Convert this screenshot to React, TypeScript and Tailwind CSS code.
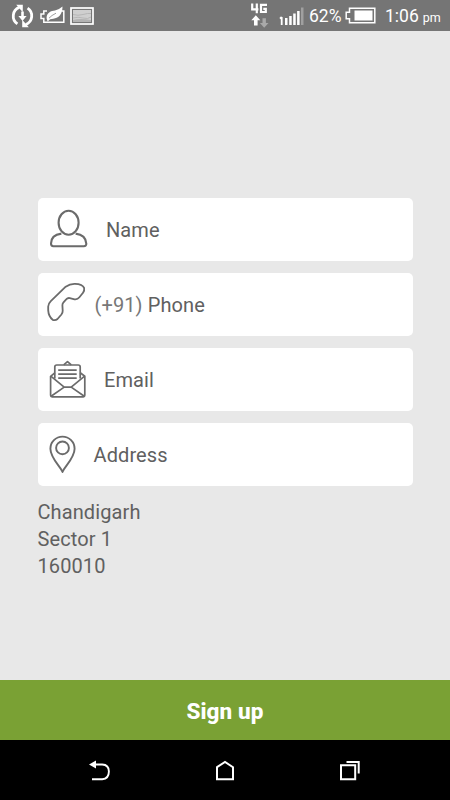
const fields = [
  { label: "Name", icon: <PersonIcon />, className: "pl-[11.5px] gap-[18px]" },
  { label: "Phone", prefix: "(+91)", icon: <PhoneIcon />, className: "pl-[9px] gap-[9px]" },
  { label: "Email", icon: <MailIcon />, className: "pl-[11.5px] gap-[18px]" },
  { label: "Address", icon: <PinIcon />, className: "pl-[11.5px] gap-[17.5px]" },
];

function PersonIcon() {
  return (
    <svg width="39" height="40" viewBox="0 0 39 40" fill="none" stroke="#6b6b6b" strokeWidth="2.1">
      <ellipse cx="19.6" cy="13.7" rx="10" ry="12" />
      <path d="M12.4 24.6C5.5 25.5 2 29.3 2 34.6Q2 37.2 4.4 37.2H34.8Q37.4 37.2 37.3 34.6C37 29.4 33.7 25.5 26.6 24.6" strokeLinejoin="round" />
    </svg>
  );
}

function PhoneIcon() {
  return (
    <svg className="-mt-[5px]" width="39" height="40" viewBox="0 0 39 40" fill="none" stroke="#6b6b6b" strokeWidth="1.8" strokeLinejoin="round">
      <path d="M3.8 19.2L18.7 4.7Q23 1.6 28 1.8Q35.5 2 37.1 5.8Q37.7 8.8 36 10.8L32.4 15.3Q30.5 17.7 27.6 17.3L22.8 16.1Q20.8 15.6 19.4 17.2L16.5 20.3Q15.3 21.6 15.4 23.4L15.7 28.8Q15.8 30.8 14.4 32.5L10.5 37Q8.4 38.9 5.7 37.8Q1.6 34.5 1.2 28.4V24.5Q1.6 21.3 3.8 19.2Z" />
    </svg>
  );
}

function MailIcon() {
  return (
    <svg className="mt-px" width="37" height="40" viewBox="0 0 37 40" fill="none" stroke="#6b6b6b" strokeWidth="1.7" strokeLinejoin="round">
      <path d="M5.8 18.6V7Q5.8 5 7.8 5H29.2Q31.2 5 31.2 7V18.6" />
      <path d="M14.7 4.8L18.5 1.6L22.3 4.8" />
      <path d="M9.2 10.2H27.7M9.2 14.2H27.7M9.2 18.2H27.7" />
      <path d="M5.8 12.8L1.6 16.3V35.3Q1.6 36.8 3.1 36.8H34.3Q35.8 36.8 35.8 35.3V16.3L31.2 12.8" />
      <path d="M1.8 16.2L15.2 27.1H22.2L35.6 16.2M2.1 36.2L15.2 27.1M22.2 27.1L35.3 36.2" />
    </svg>
  );
}

function PinIcon() {
  return (
    <svg className="mt-[2px]" width="27" height="40" viewBox="0 0 27 40" fill="none" stroke="#6b6b6b" strokeWidth="1.9">
      <path d="M13.5 37C11.5 31.5 1.4 23 1.4 13.7A12.1 12.1 0 0 1 25.6 13.7C25.6 23 15.5 31.5 13.5 37Z" strokeLinejoin="round" />
      <circle cx="13.5" cy="12.9" r="6.4" />
    </svg>
  );
}

function StatusBar() {
  return (
    <header className="flex h-[31px] shrink-0 items-center bg-[#757575] text-white">
      <svg className="ml-[11px]" width="23" height="24" viewBox="0 0 23 24" fill="none" stroke="#fff" strokeWidth="2.8">
        <path d="M6.4 19.8A9.3 9.3 0 0 1 8.2 3.4M16.6 4.2A9.3 9.3 0 0 1 14.8 20.6" />
        <path d="M5.2 0.8H11.8V8.2ZM17.8 23.2H11.2V15.8Z" fill="#fff" stroke="none" />
        <path d="M11.5 7.5V13" strokeWidth="2.6" />
        <path d="M7.4 12H15.6L11.5 17Z" fill="#fff" stroke="none" />
      </svg>
      <svg className="ml-[6px] -mt-px" width="25" height="20" viewBox="0 0 25 20" fill="none" stroke="#fff" strokeWidth="1.5">
        <path d="M7 6H3.8V9H1V13.4H3.8V17.2H23.8V6H21.5" />
        <path d="M6.6 13.4C6.3 7.4 11.2 5.8 15 5.4Q19.5 4.5 22.5 1.6C22.5 8.5 19.5 14.2 10.2 14.2L7.6 16.4Z" fill="#fff" stroke="none" />
        <path d="M9 13.2Q11.5 10.3 16 8.2" stroke="#757575" strokeWidth="0.7" />
      </svg>
      <svg className="ml-[5px]" width="24" height="18" viewBox="0 0 24 18">
        <rect x="1" y="1" width="22" height="16" fill="#777" stroke="#fff" strokeWidth="1.7" />
        <rect x="3" y="3" width="18" height="12" fill="#cfcfcf" />
        <path d="M3 7.5Q8 9 13 7.5T21 6.5M3 11Q8 9.5 13 11T21 10" fill="none" stroke="#b0b0b0" strokeWidth="0.8" />
        <path d="M3 13Q10 11 21 13V15H3Z" fill="#b3b3b3" />
      </svg>
      <svg className="ml-[156px]" width="20" height="27" viewBox="0 0 20 27" fill="none" stroke="#fff" strokeWidth="2.2">
        <path d="M2.2 1.5V7.3H8.4M6.8 1.5V11.2M17 2.8H11V10H15.8V6.8H13.3" />
        <path d="M5.8 13.2L10.3 18.2H7.6V23.4H4V18.2H1.3Z" fill="#fff" stroke="none" />
        <path d="M14.2 25.8L9.9 21H12.5V16.2H15.9V21H18.5Z" fill="#a9a9a9" stroke="none" />
      </svg>
      <svg className="ml-[9px]" width="25" height="20" viewBox="0 0 25 20">
        <path d="M2.7 11V19M1 12.6L2.7 11" stroke="#fff" strokeWidth="1.8" fill="none" />
        <path d="M6 12H8.5V19H6ZM10.2 10H12.7V19H10.2ZM14.2 7.5H16.7V19H14.2ZM18.1 5H20.6V19H18.1Z" fill="#fff" />
        <path d="M22 1.5H24.5V19H22Z" fill="#a0a0a0" />
      </svg>
      <span className="ml-[5px] mt-[3px] w-[34px] whitespace-nowrap text-[17.5px] leading-none">62%</span>
      <svg className="ml-[2px]" width="31" height="17" viewBox="0 0 31 17">
        <path d="M4.5 1.2H29.8V15.8H4.5V11.7H1.2V5.3H4.5Z" fill="none" stroke="#fff" strokeWidth="1.5" />
        <rect x="9.5" y="3.5" width="18" height="10" fill="#fff" />
      </svg>
      <span className="ml-[9px] mt-[3px] whitespace-nowrap text-[17.5px] leading-none">1:06</span>
      <span className="ml-[4px] mt-[6px] text-[12.5px] leading-none">pm</span>
    </header>
  );
}

function NavBar() {
  return (
    <nav className="flex h-[60px] shrink-0 items-center justify-between bg-black px-[88px] pb-[3px]">
      <svg width="24" height="24" viewBox="0 0 24 24" fill="none" stroke="#fff" strokeWidth="1.9">
        <path d="M6 7.5H14.2Q20.9 7.8 20.9 14.5Q20.9 21.7 14.2 22.3H4" />
        <path d="M1 7.5L8 3.6V11.4Z" fill="#fff" stroke="none" />
      </svg>
      <svg width="24" height="24" viewBox="0 0 24 24" fill="none" stroke="#fff" strokeWidth="2">
        <path d="M4 10.2L12 5L20 10.2V22.3H4Z" />
      </svg>
      <svg width="24" height="24" viewBox="0 0 24 24" fill="none" stroke="#fff" strokeWidth="2">
        <path d="M3 8.2H17.2V22.2H3Z" />
        <path d="M8.5 5H20.7V16.5" />
      </svg>
    </nav>
  );
}

export default function App() {
  return (
    <div className="flex h-screen flex-col overflow-hidden bg-[#e8e8e8] font-['Roboto',sans-serif] text-[#606060]">
      <StatusBar />

      <main className="flex-1 px-[37.5px] pt-[167px]">
        <form className="flex flex-col gap-[12.5px]">
          {fields.map((field) => (
            <label key={field.label} className={`flex h-[62.5px] items-center rounded-[5px] bg-white text-[20px] tracking-[0.1px] ${field.className}`}>
              {field.icon}
              <span className="mt-[2px] leading-none">
                {field.prefix && <span className="text-[#777777]">{field.prefix} </span>}
                {field.label}
              </span>
            </label>
          ))}
        </form>

        <address className="mt-[13px] text-[20px] leading-[27px] tracking-[0.1px] not-italic">
          <p>Chandigarh</p>
          <p>Sector 1</p>
          <p>160010</p>
        </address>
      </main>

      <button type="button" className="h-[60px] shrink-0 bg-[#7aa134] pt-[3px] text-[22.5px] font-extrabold tracking-[0.1px] text-white">
        Sign up
      </button>
      <NavBar />
    </div>
  );
}
